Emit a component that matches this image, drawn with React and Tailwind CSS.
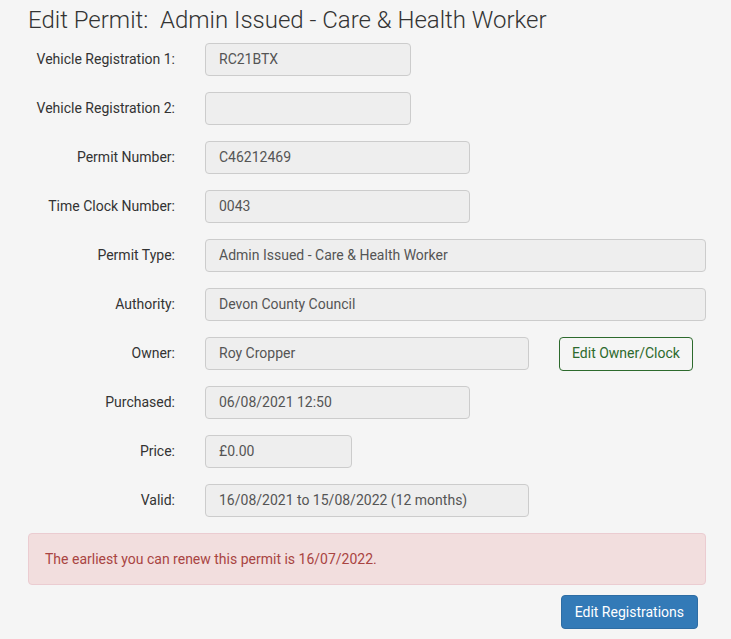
const rows = [
  { label: "Vehicle Registration 1:", value: "RC21BTX", w: "w-[206px]" },
  { label: "Vehicle Registration 2:", value: "", w: "w-[206px]" },
  { label: "Permit Number:", value: "C46212469", w: "w-[265px]" },
  { label: "Time Clock Number:", value: "0043", w: "w-[265px]" },
  { label: "Permit Type:", value: "Admin Issued - Care & Health Worker", w: "w-[501px]" },
  { label: "Authority:", value: "Devon County Council", w: "w-[501px]" },
  { label: "Owner:", value: "Roy Cropper", w: "w-[324px]", button: true },
  { label: "Purchased:", value: "06/08/2021 12:50", w: "w-[265px]" },
  { label: "Price:", value: "£0.00", w: "w-[147px]" },
  { label: "Valid:", value: "16/08/2021 to 15/08/2022 (12 months)", w: "w-[324px]" },
];

export default function App() {
  return (
    <div className="min-h-screen bg-[#f5f5f5] font-['Roboto',sans-serif] text-[14px] text-[#333]">
      <div className="w-[678px] ml-[28px] pt-[6px]">
        <h1 className="text-[24px] font-light leading-[28px] text-[#333] whitespace-pre">
          Edit Permit:  Admin Issued - Care &amp; Health Worker
        </h1>

        <div className="mt-[9px] flex flex-col gap-[16px]">
          {rows.map((r) => (
            <div key={r.label} className="flex items-center h-[33px]">
              <label className="w-[147px] text-right">{r.label}</label>
              <div
                className={`ml-[30px] ${r.w} h-[33px] flex items-center px-[13px] bg-[#eeeeee] border border-[#cccccc] rounded-[4px] text-[#555]`}
              >
                {r.value}
              </div>
              {r.button && (
                <button className="ml-[30px] h-[34px] px-[12px] border border-[#2d6a2d] rounded-[4px] text-[#2d6a2d] bg-transparent">
                  Edit Owner/Clock
                </button>
              )}
            </div>
          ))}
        </div>

        <div className="mt-[16px] h-[52px] flex items-center px-[16px] bg-[#f2dede] border border-[#ebccd1] rounded-[4px] text-[#a94442]">
          The earliest you can renew this permit is 16/07/2022.
        </div>

        <div className="mt-[10px] flex justify-end pr-[8px]">
          <button className="h-[34px] px-[13px] bg-[#337ab7] border border-[#2e6da4] rounded-[4px] text-white">
            Edit Registrations
          </button>
        </div>
      </div>
    </div>
  );
}
